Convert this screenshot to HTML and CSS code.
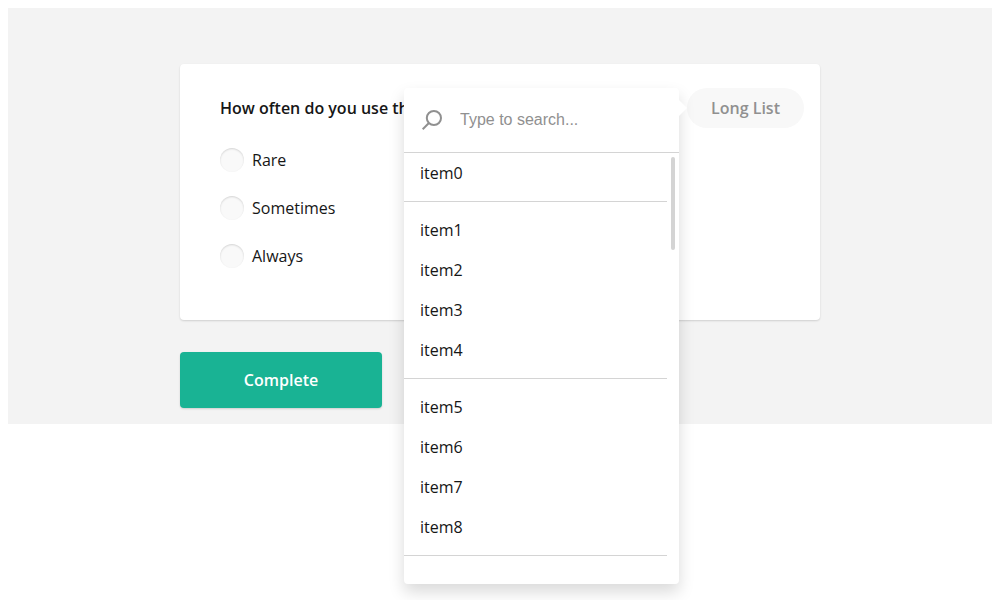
FILE: index.html
```html
<!DOCTYPE html>
<html lang="en">
<head>
<meta charset="utf-8">
<title>Survey</title>
<link rel="stylesheet" href="styles.css">
</head>
<body>
<main class="survey">
  <section class="question">
    <header class="question-header">
      <h1 class="question-title">How often do you use the</h1>
      <div class="action">
        <button class="action-button" type="button">Long List</button>
        <div class="popup">
          <span class="popup-pointer"></span>
          <div class="search">
            <svg class="search-icon" viewBox="0 0 24 24"><circle cx="13.9" cy="10" r="7.1"/><path d="M8.9 15 2.7 21.2"/></svg>
            <input class="search-input" type="text" placeholder="Type to search...">
          </div>
          <div class="list-area">
            <ul class="list">
              <li class="item">item0</li>
              <li class="separator"></li>
              <li class="item">item1</li>
              <li class="item">item2</li>
              <li class="item">item3</li>
              <li class="item">item4</li>
              <li class="separator"></li>
              <li class="item">item5</li>
              <li class="item">item6</li>
              <li class="item">item7</li>
              <li class="item">item8</li>
              <li class="separator"></li>
            </ul>
            <div class="scroll-thumb"></div>
          </div>
        </div>
      </div>
    </header>
    <div class="choices">
      <label class="choice"><span class="radio"></span>Rare</label>
      <label class="choice"><span class="radio"></span>Sometimes</label>
      <label class="choice"><span class="radio"></span>Always</label>
    </div>
  </section>
  <button class="complete" type="button">Complete</button>
</main>
</body>
</html>
```
FILE: styles.css
```css
* {
  box-sizing: border-box;
}

body {
  min-height: 100vh;
  margin: 0;
  padding: 8px;
  background: #fff;
  color: #161616;
  font: 16px/24px "Open Sans", sans-serif;
}

.survey {
  height: 416px;
  padding: 56px 172px 16px;
  background: #f3f3f3;
}

.question {
  height: 256px;
  padding: 24px 16px 0 40px;
  border-radius: 4px;
  background: #fff;
  box-shadow: 0 1px 2px rgba(0, 0, 0, 0.15);
}

.question-header {
  display: flex;
  justify-content: space-between;
  align-items: center;
  height: 40px;
}

.question-title {
  margin: 0;
  font-size: 16px;
  font-weight: 600;
  white-space: nowrap;
}

.action {
  position: relative;
}

.action-button {
  display: block;
  width: 117px;
  height: 40px;
  padding: 0;
  border: 0;
  border-radius: 20px;
  background: #f8f8f8;
  color: #909090;
  font: 600 16px/24px "Open Sans", sans-serif;
}

.choices {
  display: grid;
  gap: 24px;
  margin-top: 20px;
}

.choice {
  display: flex;
  gap: 8px;
}

.radio {
  width: 24px;
  height: 24px;
  border-radius: 50%;
  background: #f9f9f9;
  box-shadow: inset 0 1px 2px rgba(0, 0, 0, 0.15);
}

.complete {
  display: block;
  width: 202px;
  height: 56px;
  margin-top: 32px;
  border: 0;
  border-radius: 4px;
  background: #19b394;
  box-shadow: 0 1px 2px rgba(0, 0, 0, 0.15);
  color: #fff;
  font: 600 16px/24px "Open Sans", sans-serif;
}

/* Dropdown opened to the left of its action button */
.popup {
  position: absolute;
  top: 0;
  right: 125px;
  display: flex;
  flex-direction: column;
  width: 275px;
  height: 496px;
  border-radius: 4px;
  background: #fff;
  box-shadow: 0 8px 16px rgba(0, 0, 0, 0.15);
}

.popup-pointer {
  position: absolute;
  top: 12px;
  right: -8px;
  border: 8px solid transparent;
  border-right: 0;
  border-left-color: #fff;
}

.search {
  display: flex;
  align-items: center;
  gap: 16px;
  height: 65px;
  padding: 0 16px;
  border-bottom: 1px solid #d4d4d4;
}

.search-icon {
  width: 24px;
  height: 24px;
  fill: none;
  stroke: #909090;
  stroke-width: 2;
}

.search-input {
  flex: 1;
  min-width: 0;
  padding: 0;
  border: 0;
  outline: 0;
  background: none;
  font: 16px/24px "Liberation Sans", Arial, sans-serif;
}

.search-input::placeholder {
  color: #909090;
}

.list-area {
  display: flex;
  justify-content: space-between;
  flex: 1;
  padding-right: 4px;
}

.list {
  width: 263px;
  margin: 0;
  padding: 0;
  list-style: none;
}

.item {
  padding: 8px 16px;
}

.separator {
  height: 1px;
  margin: 8px 0;
  background: #d4d4d4;
}

.scroll-thumb {
  width: 4px;
  height: 93px;
  margin-top: 4px;
  border-radius: 2px;
  background: #d4d4d4;
}
```
